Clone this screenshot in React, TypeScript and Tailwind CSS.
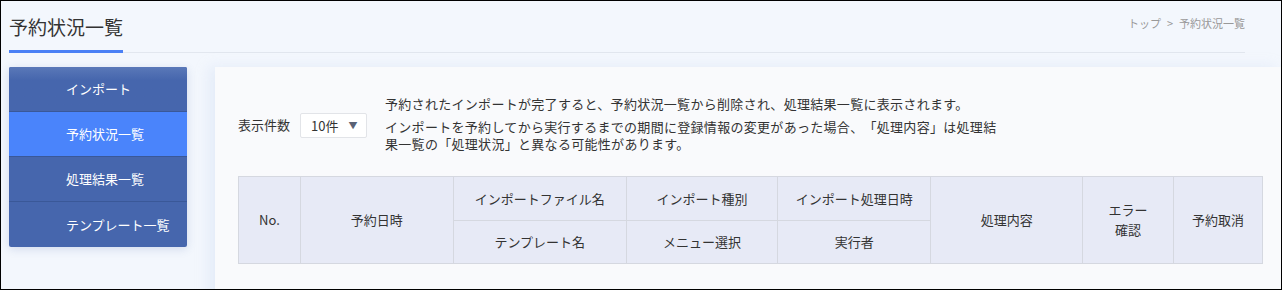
import React from "react"

const menuItems = [
  { label: "インポート", active: false },
  { label: "予約状況一覧", active: true },
  { label: "処理結果一覧", active: false },
  { label: "テンプレート一覧", active: false },
]

const font = { fontFamily: '"Noto Sans CJK JP", "Noto Sans", sans-serif' }

export default function App() {
  return (
    <div
      className="w-[1282px] h-[290px] border border-black bg-[#f3f7fd] overflow-hidden text-[#333] [text-spacing-trim:space-all]"
      style={font}
    >
      {/* Header */}
      <div className="ml-[8px] w-[1236px] h-[52px] flex items-end justify-between border-b border-[#e2e7ef]">
        <div className="h-[51px] w-[114px] flex items-center border-b-[3px] border-[#4a80f5] -mb-px">
          <h1 className="text-[19px] leading-none whitespace-nowrap">予約状況一覧</h1>
        </div>
        <div className="h-[51px] flex items-center text-[11px] text-[#999] gap-[6px] pb-[7px] whitespace-nowrap">
          <span>トップ</span>
          <span>&gt;</span>
          <span>予約状況一覧</span>
        </div>
      </div>

      <div className="flex mt-[14px] h-[300px]">
        {/* Sidebar */}
        <nav className="ml-[8px] w-[178px] self-start flex flex-col rounded-[2px] overflow-hidden shadow-[0_2px_10px_rgba(60,90,160,0.18)]">
          {menuItems.map((item, i) => (
            <div
              key={item.label}
              className={
                "h-[45px] flex items-center pl-[57px] text-[13px] text-white " +
                (i < menuItems.length - 1 ? "border-b border-[#3a5898] " : "") +
                (item.active ? "bg-[#4a84fb]" : "bg-[#4666ad]") +
                (i === 0 ? " bg-gradient-to-b from-[#5a78b8] to-[#4666ad] to-[30%]" : "")
              }
            >
              {item.label}
            </div>
          ))}
        </nav>

        {/* Main panel */}
        <main className="ml-[28px] flex-1 bg-[#f9fafc] pl-[23px] pr-[18px] pt-[28px] shadow-[-6px_0_12px_rgba(200,215,240,0.35)]">
          <div className="flex items-center">
            <span className="text-[13px] mt-[2px] whitespace-nowrap">表示件数</span>
            <div className="ml-[10px] mt-[4px] w-[67px] h-[25px] bg-white border border-[#e2e4e8] rounded-[2px] flex items-center pl-[10px] gap-[10px] text-[13px]">
              <span>10件</span>
              <span className="text-[9px] text-[#5a6275]">▼</span>
            </div>
            <div className="ml-[18px] w-[616px] text-[13px] leading-[17px] tracking-[0.3px]">
              <p className="mb-[6px]">
                予約されたインポートが完了すると、予約状況一覧から削除され、処理結果一覧に表示されます。
              </p>
              <p>
                インポートを予約してから実行するまでの期間に登録情報の変更があった場合、「処理内容」は処理結果一覧の「処理状況」と異なる可能性があります。
              </p>
            </div>
          </div>

          <table className="mt-[24px] border-collapse text-[13px] text-center">
            <thead className="bg-[#e7eaf6]">
              <tr className="h-[44px]">
                <th rowSpan={2} className="w-[62px] border border-[#d5d8e0] font-normal">No.</th>
                <th rowSpan={2} className="w-[153px] border border-[#d5d8e0] font-normal">予約日時</th>
                <th className="w-[173px] border border-[#d5d8e0] font-normal">インポートファイル名</th>
                <th className="w-[152px] border border-[#d5d8e0] font-normal">インポート種別</th>
                <th className="w-[153px] border border-[#d5d8e0] font-normal">インポート処理日時</th>
                <th rowSpan={2} className="w-[152px] border border-[#d5d8e0] font-normal">処理内容</th>
                <th rowSpan={2} className="w-[91px] border border-[#d5d8e0] font-normal leading-[20px]">
                  エラー
                  <br />
                  確認
                </th>
                <th rowSpan={2} className="w-[89px] border border-[#d5d8e0] font-normal">予約取消</th>
              </tr>
              <tr className="h-[43px]">
                <th className="border border-[#d5d8e0] font-normal">テンプレート名</th>
                <th className="border border-[#d5d8e0] font-normal">メニュー選択</th>
                <th className="border border-[#d5d8e0] font-normal">実行者</th>
              </tr>
            </thead>
          </table>
        </main>
      </div>
    </div>
  )
}
